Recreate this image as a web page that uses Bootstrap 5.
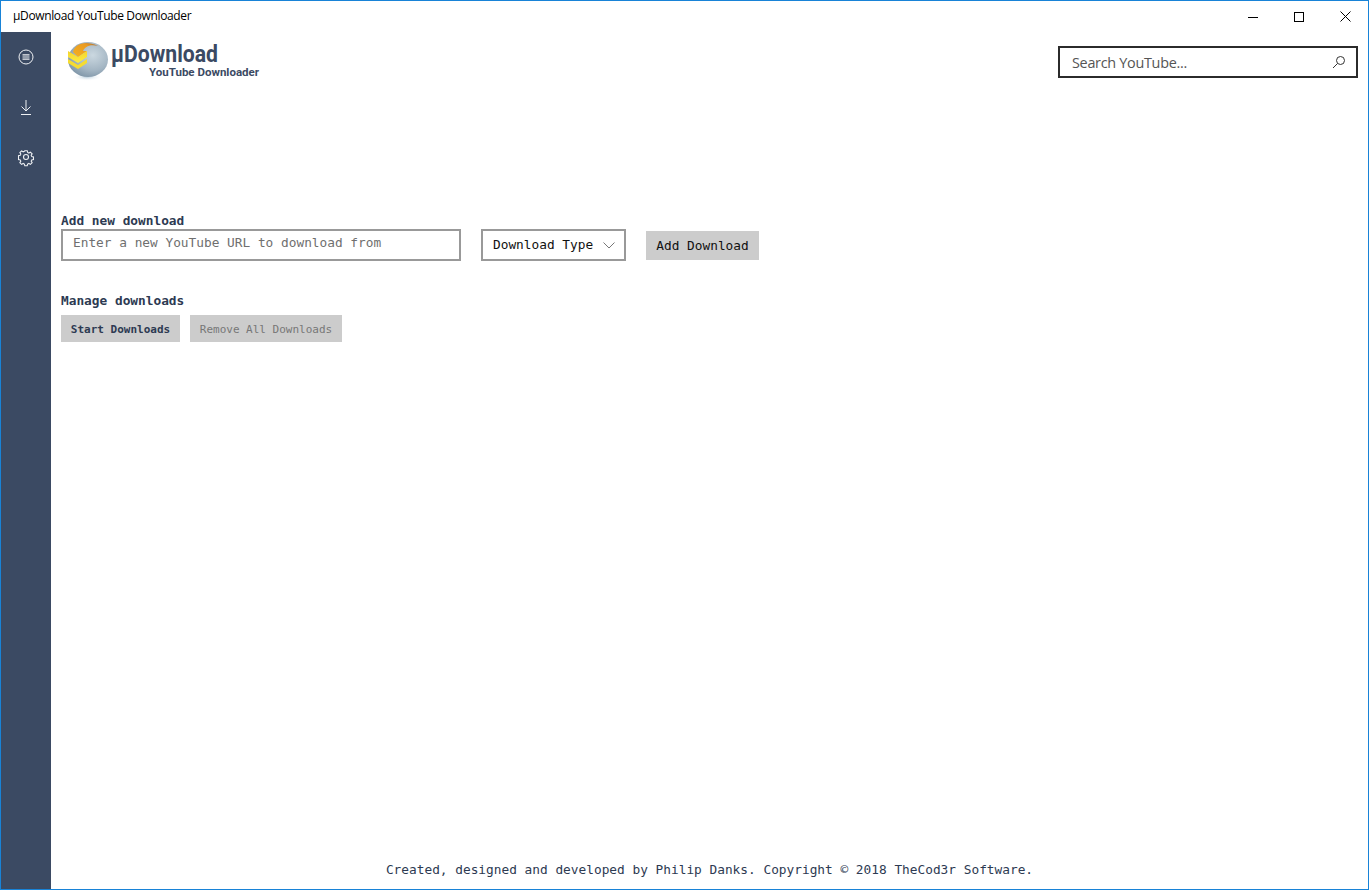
<!DOCTYPE html>
<html lang="en">
<head>
<meta charset="utf-8">
<title>µDownload YouTube Downloader</title>
<link href="https://cdn.jsdelivr.net/npm/bootstrap@5.3.0/dist/css/bootstrap.min.css" rel="stylesheet">
<style>
html,body{height:100%;margin:0;background:#fff;overflow:hidden}
.app-window{height:890px;width:1369px;border:1px solid #1883d7;display:flex;flex-direction:column}
.app-titlebar{height:31px;flex:none;font:12px/1 "Open Sans",sans-serif;color:#000;padding-left:12px}
.app-title{letter-spacing:-.03em;position:relative;top:-1px}
.win-controls{display:flex;height:100%}
.win-btn{width:46px;height:31px;display:flex;align-items:center;justify-content:center;background:none;border:0;padding:0}
.app-body{flex:1;min-height:0;display:flex}
.app-rail{width:50px;flex:none;background:#3b4a63;padding-top:15px;gap:30px;display:flex;flex-direction:column;align-items:center}
.rail-btn{width:20px;height:20px;padding:0;border:0;background:none;display:block;line-height:0}
.app-main{flex:1;min-width:0;display:flex;flex-direction:column;padding:0 10px;color:#2d3a52;font-family:"DejaVu Sans Mono","Liberation Mono",monospace}
.app-head{height:181px;flex:none;display:flex;justify-content:space-between;align-items:flex-start}
.app-logo{margin-top:6px;margin-left:5px;display:block}
.search-box{width:300px;height:32px;margin-top:14px;border:2px solid #2b2b2b;display:flex;align-items:center;padding:0 10px 0 12px}
.search-box input{flex:1;border:0;outline:0;padding:0;font:14.4px "Open Sans",sans-serif;color:#333;letter-spacing:-.02em;background:transparent;min-width:0}
.search-box input::placeholder{color:#555;opacity:1}
.sect-label{font-size:12.8px;line-height:16px;font-weight:600;color:#2d3a52;margin:0}
.url-input.form-control{width:400px;height:32px;border:2px solid #999;border-radius:0;padding:0 10px 6px;font:12.8px "DejaVu Sans Mono",monospace;color:#333;box-shadow:none}
.url-input::placeholder{color:#6f6f6f;opacity:1}
.type-select{width:145px;height:32px;border:2px solid #999;display:flex;align-items:center;justify-content:space-between;padding:0 9px 0 10px;background:#fff;font-size:12.8px;color:#111}
.add-row{display:flex;gap:20px;align-items:flex-start;height:32px}
.flat-btn.btn{background:#ccc;border:0;border-radius:0;color:#111;font-family:"DejaVu Sans Mono",monospace;padding:0}
.flat-add.btn{width:113px;height:29px;margin-top:2px;font-size:12.8px}
.flat-sm.btn{height:27px;font-size:11px;font-weight:600;color:#2d3a52;padding-top:3px}
.flat-start.btn{width:119px}
.flat-remove.btn{width:152px;color:#777;font-weight:400;opacity:1}
.manage-row{gap:10px}
.manage-label{margin-top:32px;margin-bottom:6px}
.app-foot{margin-top:auto;height:25px;text-align:center;font-size:12.8px;line-height:1;color:#2d3a52}
</style>
</head>
<body>
<div class="app-window">
  <div class="app-titlebar d-flex align-items-center justify-content-between">
    <span class="app-title">µDownload YouTube Downloader</span>
    <div class="win-controls">
      <button class="win-btn" aria-label="Minimise"><svg width="10" height="10"><path d="M0 5.500H10" stroke="#000"/></svg></button>
      <button class="win-btn" aria-label="Maximise"><svg width="10" height="10"><rect x=".5" y=".5" width="9" height="9" fill="none" stroke="#000"/></svg></button>
      <button class="win-btn" aria-label="Close"><svg width="11" height="11"><path d="M.5.5l10 10M10.500.5l-10 10" stroke="#000" fill="none"/></svg></button>
    </div>
  </div>
  <div class="app-body">
    <nav class="app-rail">
      <button class="rail-btn" aria-label="Menu"><svg width="20" height="20" viewBox="0 0 20 20" fill="none" stroke="#eef0f3" stroke-width="1"><circle cx="10" cy="10" r="7"/><path d="M6.500 7.800h7M6.500 10h7M6.500 12.200h7" stroke-width="1.200"/></svg></button>
      <button class="rail-btn" aria-label="Downloads"><svg width="20" height="20" viewBox="0 0 20 20" fill="none" stroke="#eef0f3" stroke-width="1"><path d="M10 3v11M5.500 9.500L10 14l4.500-4.500M5 17.500h10"/></svg></button>
      <button class="rail-btn" aria-label="Settings"><svg width="20" height="20" viewBox="0 0 20 20" fill="none" stroke="#eef0f3" stroke-width="1.100"><circle cx="10" cy="10" r="2.500"/><path d="M8.700 3.500h2.600l.4 1.800 1.300.6 1.600-1 1.800 1.800-1 1.600.6 1.300 1.800.4v2.600l-1.800.4-.6 1.300 1 1.600-1.800 1.800-1.600-1-1.300.6-.4 1.800H8.700l-.4-1.800-1.300-.6-1.600 1-1.800-1.800 1-1.600-.6-1.300-1.800-.4V8.700l1.800-.4.6-1.300-1-1.600 1.800-1.800 1.600 1 1.300-.6z" transform="translate(10 10) scale(.96) translate(-10 -10)"/></svg></button>
    </nav>
    <main class="app-main">
      <div class="app-head">
        <svg class="app-logo" width="200" height="46" viewBox="0 0 200 46" xmlns="http://www.w3.org/2000/svg">
          <defs>
            <radialGradient id="gl" cx=".62" cy=".38" r=".72"><stop offset="0" stop-color="#cbd8e0"/><stop offset=".6" stop-color="#a3b5c3"/><stop offset="1" stop-color="#7890a3"/></radialGradient>
            <linearGradient id="yl" x1="0" y1="0" x2="0" y2="1"><stop offset="0" stop-color="#f6d52c"/><stop offset="1" stop-color="#fbec40"/></linearGradient>
            <linearGradient id="or" x1="0" y1="1" x2="1" y2="0"><stop offset="0" stop-color="#f5b21e"/><stop offset=".7" stop-color="#ea9a22"/><stop offset="1" stop-color="#9a6a44"/></linearGradient>
            <radialGradient id="sh"><stop offset="0" stop-color="#a9c4d6" stop-opacity=".8"/><stop offset="1" stop-color="#fff" stop-opacity="0"/></radialGradient>
          </defs>
          <ellipse cx="21" cy="39" rx="15" ry="4" fill="url(#sh)"/>
          <ellipse cx="22" cy="21.500" rx="20" ry="17.500" fill="url(#gl)"/>
          <path d="M7 14C9 6 19 2 32 8 23 6 19 9 17 13l4 0-9 6z" fill="url(#or)"/>
          <path d="M2 13l10 6 9-6v6l-9 6-10-6z" fill="url(#yl)"/>
          <path d="M2 21l10 6 9-6v4l-9 6-10-6z" fill="#f6dc30"/>
          <text x="45" y="24" font-family="Roboto,'Liberation Sans',sans-serif" font-weight="700" font-size="24" fill="#3b4a63" textLength="107" lengthAdjust="spacingAndGlyphs">µDownload</text>
          <text x="83" y="38" font-family="Roboto,'Liberation Sans',sans-serif" font-weight="700" font-size="10.500" fill="#3b4a63" textLength="110" lengthAdjust="spacingAndGlyphs">YouTube Downloader</text>
        </svg>
        <div class="search-box">
          <input type="text" placeholder="Search YouTube..." aria-label="Search YouTube">
          <svg width="14" height="14" viewBox="0 0 14 14" fill="none" stroke="#333" stroke-width="1"><circle cx="8.500" cy="5.500" r="4"/><path d="M5.500 8.500L1 13"/></svg>
        </div>
      </div>
      <h2 class="sect-label">Add new download</h2>
      <div class="add-row">
        <input class="form-control url-input" type="text" placeholder="Enter a new YouTube URL to download from" aria-label="YouTube URL">
        <div class="type-select"><span>Download Type</span><svg width="12" height="7" viewBox="0 0 12 7" fill="none" stroke="#777"><path d="M.5.500L6 6l5.500-5.500"/></svg></div>
        <button class="btn flat-btn flat-add">Add Download</button>
      </div>
      <h2 class="sect-label manage-label">Manage downloads</h2>
      <div class="d-flex manage-row">
        <button class="btn flat-btn flat-sm flat-start">Start Downloads</button>
        <button class="btn flat-btn flat-sm flat-remove">Remove All Downloads</button>
      </div>
      <footer class="app-foot">Created, designed and developed by Philip Danks. Copyright © 2018 TheCod3r Software.</footer>
    </main>
  </div>
</div>
<script src="https://cdn.jsdelivr.net/npm/bootstrap@5.3.0/dist/js/bootstrap.bundle.min.js"></script>
</body>
</html>
